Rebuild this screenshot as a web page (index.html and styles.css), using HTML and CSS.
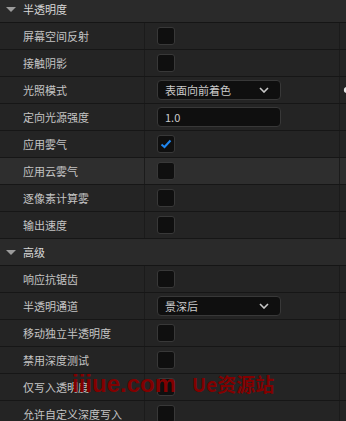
FILE: index.html
```html
<!DOCTYPE html>
<html lang="zh-CN">

<head>
    <meta charset="UTF-8">
    <meta name="viewport" content="width=device-width, initial-scale=1.0">
    <title>Details</title>
    <link rel="stylesheet" href="styles.css">
</head>

<body>
    <div class="panel">
        <div class="category"><span class="arrow"></span>半透明度</div>

        <div class="row">
            <div class="name">屏幕空间反射</div>
            <div class="value"><span class="checkbox"></span></div>
            <div class="reset"></div>
        </div>
        <div class="row">
            <div class="name">接触阴影</div>
            <div class="value"><span class="checkbox"></span></div>
            <div class="reset"></div>
        </div>
        <div class="row">
            <div class="name">光照模式</div>
            <div class="value">
                <div class="combo">
                    <span>表面向前着色</span>
                    <svg class="chevron" width="10" height="6" viewBox="0 0 10 6">
                        <path d="M1 1 L5 5 L9 1" fill="none" stroke="#c8c8c8" stroke-width="1.6" />
                    </svg>
                </div>
            </div>
            <div class="reset">
                <svg class="reset-icon" width="8" height="8" viewBox="0 0 8 8">
                    <circle cx="5" cy="4" r="3.2" fill="#e6e6e6" />
                </svg>
            </div>
        </div>
        <div class="row">
            <div class="name">定向光源强度</div>
            <div class="value">
                <div class="field">1.0</div>
            </div>
            <div class="reset"></div>
        </div>
        <div class="row">
            <div class="name">应用雾气</div>
            <div class="value">
                <span class="checkbox">
                    <svg width="12" height="10" viewBox="0 0 12 10">
                        <path d="M1.5 5.5 L4.5 8 L10.5 1.5" fill="none" stroke="#1f86f0" stroke-width="2" />
                    </svg>
                </span>
            </div>
            <div class="reset"></div>
        </div>
        <div class="row hover">
            <div class="name">应用云雾气</div>
            <div class="value"><span class="checkbox"></span></div>
            <div class="reset"></div>
        </div>
        <div class="row">
            <div class="name">逐像素计算雾</div>
            <div class="value"><span class="checkbox"></span></div>
            <div class="reset"></div>
        </div>
        <div class="row">
            <div class="name">输出速度</div>
            <div class="value"><span class="checkbox"></span></div>
            <div class="reset"></div>
        </div>

        <div class="category"><span class="arrow"></span>高级</div>

        <div class="row">
            <div class="name">响应抗锯齿</div>
            <div class="value"><span class="checkbox"></span></div>
            <div class="reset"></div>
        </div>
        <div class="row">
            <div class="name">半透明通道</div>
            <div class="value">
                <div class="combo">
                    <span>景深后</span>
                    <svg class="chevron" width="10" height="6" viewBox="0 0 10 6">
                        <path d="M1 1 L5 5 L9 1" fill="none" stroke="#c8c8c8" stroke-width="1.6" />
                    </svg>
                </div>
            </div>
            <div class="reset"></div>
        </div>
        <div class="row">
            <div class="name">移动独立半透明度</div>
            <div class="value"><span class="checkbox"></span></div>
            <div class="reset"></div>
        </div>
        <div class="row">
            <div class="name">禁用深度测试</div>
            <div class="value"><span class="checkbox"></span></div>
            <div class="reset"></div>
        </div>
        <div class="row">
            <div class="name">仅写入透明度</div>
            <div class="value"><span class="checkbox"></span></div>
            <div class="reset"></div>
        </div>
        <div class="row">
            <div class="name">允许自定义深度写入</div>
            <div class="value"><span class="checkbox"></span></div>
            <div class="reset"></div>
        </div>
    </div>

    <!-- 浮水印 -->
    <div class="watermark">
        <span class="wm-site">iiiue.com</span>
        <span class="wm-name">Ue资源站</span>
    </div>
</body>

</html>
```

FILE: styles.css
```css
* {
    margin: 0;
    padding: 0;
    box-sizing: border-box;
}

body {
    background: #242424;
    font-family: "Noto Sans CJK SC", "Noto Sans", sans-serif;
    font-size: 11px;
    color: #c4c4c4;
    overflow: hidden;
    position: relative;
    height: 421px;
}

/* 面板被捲動了一點，第一個分類標題上方被切掉 */
.panel {
    margin-top: -4px;
}

.category {
    height: 27px;
    display: flex;
    align-items: center;
    padding-left: 6px;
    color: #d8d8d8;
    background: #2a2a2a;
    border-bottom: 1px solid #151515;
}

.arrow {
    width: 0;
    height: 0;
    border-left: 5px solid transparent;
    border-right: 5px solid transparent;
    border-top: 5px solid #9c9c9c;
    margin-right: 7px;
}

.row {
    height: 27px;
    display: flex;
    border-bottom: 1px solid #161616;
}

.row.hover {
    background: #2e2e2e;
}

.name {
    width: 145px;
    padding-left: 23px;
    display: flex;
    align-items: center;
    border-right: 1px solid #1b1b1b;
    white-space: nowrap;
}

.value {
    width: 195px;
    padding-left: 12px;
    display: flex;
    align-items: center;
    border-right: 1px solid #1b1b1b;
}

.reset {
    flex: 1;
    display: flex;
    align-items: center;
    overflow: hidden;
}

.reset-icon {
    margin-left: 2px;
    flex-shrink: 0;
}

.checkbox {
    width: 18px;
    height: 18px;
    background: #0f0f0f;
    border: 1px solid #383838;
    border-radius: 3px;
    display: flex;
    align-items: center;
    justify-content: center;
}

.combo,
.field {
    width: 124px;
    height: 20px;
    background: #0f0f0f;
    border: 1px solid #383838;
    border-radius: 4px;
    display: flex;
    align-items: center;
    padding: 0 11px 0 7px;
    color: #cacaca;
}

.combo {
    justify-content: space-between;
}

.watermark {
    position: absolute;
    left: 72px;
    top: 370px;
    display: flex;
    align-items: baseline;
    gap: 16px;
    color: #820000;
    font-weight: bold;
    pointer-events: none;
}

.wm-site {
    font-family: "Liberation Sans", sans-serif;
    font-size: 24px;
}

.wm-name {
    font-family: "Noto Sans CJK SC", sans-serif;
    font-size: 19px;
}
```
